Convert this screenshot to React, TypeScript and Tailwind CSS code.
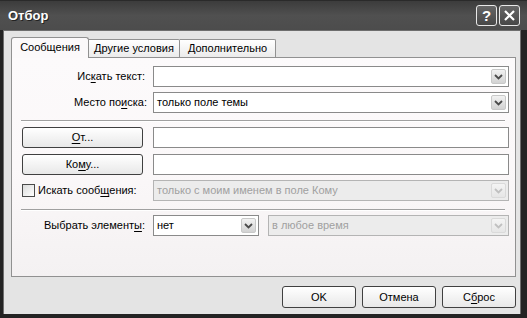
import React from "react";

function Chevron({ color }: { color: string }) {
  return (
    <svg width="9" height="6" viewBox="0 0 9 6">
      <path d="M1 1 L4.5 4.5 L8 1" fill="none" stroke={color} strokeWidth="1.8" />
    </svg>
  );
}

function Combo({ text, disabled, className }: { text: string; disabled?: boolean; className?: string }) {
  return (
    <div
      className={
        "h-[21px] border flex items-center justify-between pl-[3px] pr-[2px] " +
        (disabled ? "border-[#b4b4b4] bg-[#ececec] text-[#a0a0a0] " : "border-[#8a8a8a] bg-white text-black ") +
        (className ?? "")
      }
    >
      <span className="whitespace-nowrap">{text}</span>
      <div
        className={
          "w-[15px] h-[15px] rounded-[2px] border flex items-center justify-center " +
          (disabled
            ? "border-[#dadada] bg-gradient-to-b from-[#f4f4f4] to-[#e6e6e6]"
            : "border-[#c8c8c8] bg-gradient-to-b from-[#f2f2f2] to-[#d2d2d2]")
        }
      >
        <Chevron color={disabled ? "#c0c0c0" : "#4a4a4a"} />
      </div>
    </div>
  );
}

function Input({ className }: { className?: string }) {
  return <div className={"h-[21px] border border-[#8a8a8a] bg-white " + (className ?? "")} />;
}

function Btn({ children, className }: { children: React.ReactNode; className?: string }) {
  return (
    <div
      className={
        "h-[21px] border border-[#404040] rounded-[3px] bg-gradient-to-b from-white to-[#e8e8e8] flex items-center justify-center text-black " +
        (className ?? "")
      }
    >
      {children}
    </div>
  );
}

function U({ children }: { children: React.ReactNode }) {
  return <span className="underline underline-offset-[2px]">{children}</span>;
}

export default function App() {
  return (
    <div className="w-[527px] h-[318px] bg-[#232323] flex flex-col font-['Liberation_Sans',Arial,sans-serif] text-[11px] text-black overflow-hidden">
      {/* Title bar */}
      <div className="h-[30px] flex items-center justify-between pl-[8px] pr-[7px] bg-gradient-to-b from-[#3c3c3c] via-[#505050] to-[#4c4c4c] border-t border-[#2a2a2a]">
        <span className="text-white font-bold text-[13px] [text-shadow:1px_1px_0_#222]">Отбор</span>
        <div className="flex gap-[2px]">
          <div className="w-[21px] h-[21px] rounded-[3px] border border-[#e8e8e8] bg-gradient-to-b from-[#666666] to-[#484848] flex items-center justify-center text-white font-bold text-[15px] leading-none">
            ?
          </div>
          <div className="w-[21px] h-[21px] rounded-[3px] border border-[#e8e8e8] bg-gradient-to-b from-[#666666] to-[#484848] flex items-center justify-center">
            <svg width="13" height="13" viewBox="0 0 13 13">
              <path d="M2 2 L11 11 M11 2 L2 11" stroke="white" strokeWidth="2.2" />
            </svg>
          </div>
        </div>
      </div>

      {/* Body */}
      <div className="flex-1 pl-[3px] pr-[6px] pb-[4px]">
        <div className="h-full border-l border-t border-r border-[#6e6e6e] bg-[#e4e4e4] flex flex-col pl-[7px] pr-[4px] pt-[6px]">
          {/* Tabs */}
          <div className="flex items-end h-[20px] relative z-10">
            <div className="w-[78px] h-[21px] -mb-[1px] border border-b-0 border-[#919191] rounded-t-[3px] bg-[#fbf9fa] flex items-center justify-center pb-[1px]">
              Сообщения
            </div>
            <div className="w-[91px] h-[18px] border border-l-0 border-b-0 border-[#919191] rounded-tr-[2px] bg-gradient-to-b from-white to-[#ebebeb] flex items-center justify-center">
              Другие условия
            </div>
            <div className="w-[96px] h-[18px] border border-l-0 border-b-0 border-[#919191] rounded-tr-[2px] bg-gradient-to-b from-white to-[#ebebeb] flex items-center justify-center">
              Дополнительно
            </div>
          </div>

          {/* Panel */}
          <div className="h-[220px] border border-[#919191] bg-gradient-to-b from-[#fcfafb] via-[#fbf8f9] to-[#f4f1f2] pl-[9px] pr-[6px] pt-[8px] flex flex-col">
            <div className="flex items-center">
              <div className="w-[132px] text-right pr-[8px]">
                Ис<U>к</U>ать текст:
              </div>
              <Combo text="" className="flex-1" />
            </div>
            <div className="flex items-center mt-[5px]">
              <div className="w-[132px] text-right pr-[6px]">
                Место по<U>и</U>ска:
              </div>
              <Combo text="только поле темы" className="flex-1" />
            </div>
            <div className="mt-[7px] mr-[4px] h-[2px] border-t border-[#a0a0a0] border-b border-b-white" />
            <div className="flex items-center mt-[4px]">
              <div className="w-[132px] pl-[1px]">
                <Btn className="w-[121px] mt-[1px]">
                  <U>О</U>т...
                </Btn>
              </div>
              <Input className="flex-1" />
            </div>
            <div className="flex items-center mt-[5px]">
              <div className="w-[132px] pl-[1px]">
                <Btn className="w-[121px] mt-[1px]">
                  Ко<U>м</U>у...
                </Btn>
              </div>
              <Input className="flex-1" />
            </div>
            <div className="flex items-center mt-[5px]">
              <div className="w-[132px] flex items-center">
                <div className="w-[13px] h-[13px] border border-[#4a4a4a] bg-gradient-to-br from-[#dcdcdc] to-white ml-[1px] mr-[3px]" />
                <span>
                  Искать сооб<U>щ</U>ения:
                </span>
              </div>
              <Combo text="только с моим именем в поле Кому" disabled className="flex-1" />
            </div>
            <div className="mt-[8px] mr-[4px] h-[2px] border-t border-[#a0a0a0] border-b border-b-white" />
            <div className="flex items-center mt-[4px]">
              <div className="w-[132px] text-right pr-[8px]">
                Выбрать элемент<U>ы</U>:
              </div>
              <Combo text="нет" className="w-[106px]" />
              <Combo text="в любое время" disabled className="flex-1 ml-[9px]" />
            </div>
          </div>

          {/* Bottom buttons */}
          <div className="flex justify-end gap-[6px] mt-[9px]">
            <Btn className="w-[74px] h-[22px]">OK</Btn>
            <Btn className="w-[74px] h-[22px]">Отмена</Btn>
            <Btn className="w-[74px] h-[22px]">
              С<U>б</U>рос
            </Btn>
          </div>
        </div>
      </div>
    </div>
  );
}
